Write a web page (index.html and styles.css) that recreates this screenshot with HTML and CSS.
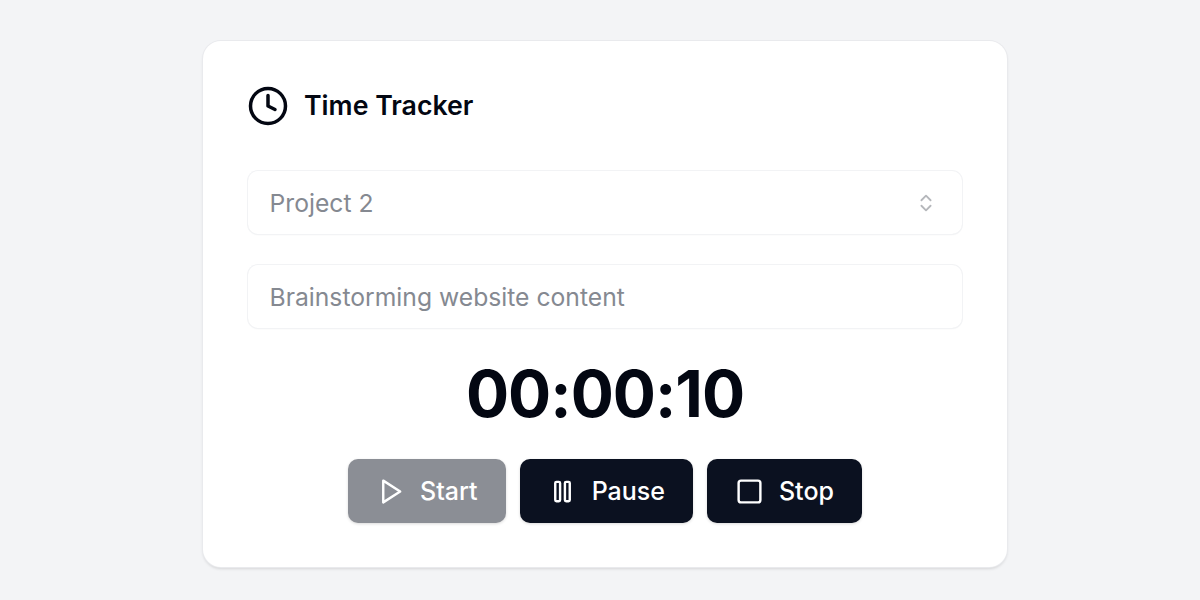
FILE: index.html
```html
<!DOCTYPE html>
<html lang="en">
<head>
  <meta charset="UTF-8">
  <title>Time Tracker</title>
  <link rel="stylesheet" href="styles.css">
</head>
<body>
  <div class="card">
    <div class="header">
      <svg class="clock" viewBox="0 0 24 24" fill="none" stroke="currentColor" stroke-width="2" stroke-linecap="round" stroke-linejoin="round">
        <circle cx="12" cy="12" r="10"/>
        <polyline points="12 6 12 12 16 14"/>
      </svg>
      <h1>Time Tracker</h1>
    </div>
    <div class="field select">
      <span>Project 2</span>
      <svg class="chevrons" viewBox="0 0 24 24" fill="none" stroke="currentColor" stroke-width="2" stroke-linecap="round" stroke-linejoin="round">
        <path d="m7 15 5 5 5-5"/>
        <path d="m7 9 5-5 5 5"/>
      </svg>
    </div>
    <div class="field">
      <span>Brainstorming website content</span>
    </div>
    <div class="timer">00:00:10</div>
    <div class="actions">
      <button class="btn start">
        <svg viewBox="0 0 24 24" fill="none" stroke="currentColor" stroke-width="2" stroke-linecap="round" stroke-linejoin="round"><polygon points="6 3 20 12 6 21 6 3"/></svg>
        Start
      </button>
      <button class="btn">
        <svg viewBox="0 0 24 24" fill="none" stroke="currentColor" stroke-width="2" stroke-linecap="round" stroke-linejoin="round"><rect x="6" y="4" width="4" height="16" rx="1"/><rect x="14" y="4" width="4" height="16" rx="1"/></svg>
        Pause
      </button>
      <button class="btn">
        <svg viewBox="0 0 24 24" fill="none" stroke="currentColor" stroke-width="2" stroke-linecap="round" stroke-linejoin="round"><rect x="3" y="3" width="18" height="18" rx="2"/></svg>
        Stop
      </button>
    </div>
  </div>
</body>
</html>
```

FILE: styles.css
```css
body {
  margin: 0;
  height: 600px;
  overflow: hidden;
  background-color: #f3f4f6;
  font-family: Inter, "Liberation Sans", sans-serif;
  color: #030712;
}
.card {
  box-sizing: border-box;
  width: 804px;
  height: 526px;
  margin: 0 auto;
  position: relative;
  top: 41px;
  left: 5px;
  padding: 44px;
  background-color: #fff;
  border-radius: 18px;
  box-shadow: 0 0 0 1px #e9eaed, 0 2px 3px rgba(0, 0, 0, 0.12);
}
.header {
  display: flex;
  align-items: center;
  gap: 15px;
  height: 42px;
  margin-bottom: 44px;
}
.clock {
  width: 42px;
  height: 42px;
}
h1 {
  margin: 0 0 2px;
  font-size: 26.7px;
  font-weight: 600;
}
.field {
  box-sizing: border-box;
  display: flex;
  align-items: center;
  justify-content: space-between;
  height: 63px;
  margin: 0 1px 31px;
  padding: 0 21.5px;
  font-size: 24.7px;
  color: #858991;
  border-radius: 10px;
  box-shadow: 0 0 0 1px #f2f3f5, 0 1px 2px rgba(0, 0, 0, 0.05);
}
.chevrons {
  width: 22px;
  height: 22px;
  margin-right: 4px;
  color: #b5b7bb;
}
.timer {
  margin-top: 32px;
  text-align: center;
  font-size: 64px;
  line-height: 68px;
  font-weight: 700;
  letter-spacing: -1px;
}
.actions {
  display: flex;
  justify-content: center;
  gap: 14px;
  margin-top: 31px;
}
.btn {
  display: flex;
  align-items: center;
  gap: 15px;
  height: 64px;
  padding: 0 28px;
  font-family: inherit;
  font-size: 25px;
  font-weight: 500;
  color: #fff;
  background-color: #0b1120;
  border: none;
  border-radius: 10px;
  box-shadow: 0 1px 3px rgba(0, 0, 0, 0.15);
}
.btn svg {
  width: 29px;
  height: 29px;
}
.start {
  background-color: #8b8e95;
}
```
